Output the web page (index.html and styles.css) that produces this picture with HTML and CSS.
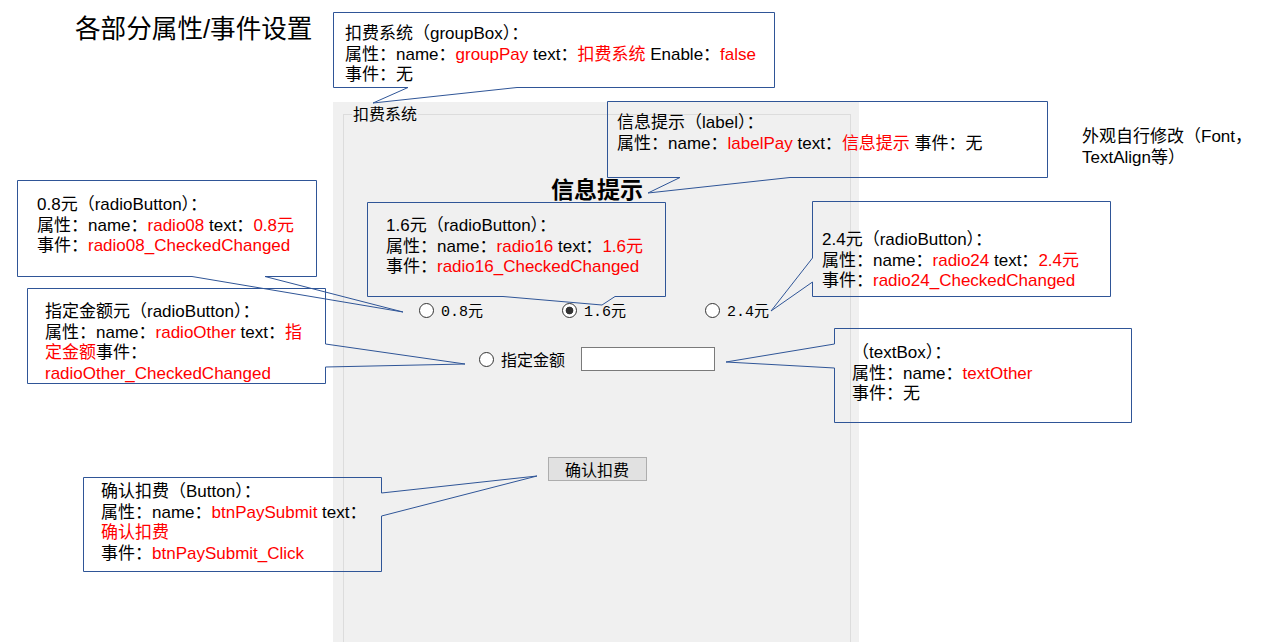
FILE: index.html
```html
<!DOCTYPE html>
<html>
<head>
<meta charset="utf-8">
<title>各部分属性/事件设置</title>
<link rel="stylesheet" href="styles.css">
</head>
<body>
<div class="slide">
<h1 class="title">各部分属性/事件设置</h1>

<!-- the form being described -->
<div class="form">
<div class="group">
<span class="group-title">扣费系统</span>
<div class="info">信息提示</div>
<div class="radio-row">
<label class="radio"><span class="dot"></span>0.8元</label>
<label class="radio checked"><span class="dot"></span>1.6元</label>
<label class="radio"><span class="dot"></span>2.4元</label>
</div>
<div class="other-row">
<label class="radio"><span class="dot"></span>指定金额</label>
<div class="textbox"></div>
</div>
<div class="button">确认扣费</div>
</div>
</div>

<!-- callout outlines with their pointers -->
<svg class="outlines" width="1262" height="642" viewBox="0 0 1262 642">
<path d="M333.5 12.5 H774.5 V87.5 H517 L373 103 L408 87.5 H333.5 Z"/>
<path d="M607.5 101.5 H1047.5 V177.5 H790 L648 193 L680 177.5 H607.5 Z"/>
<path d="M17.5 180.5 H316.5 V276.5 H265 L403 312 L192 276.5 H17.5 Z"/>
<path d="M27.5 288.5 H325.5 V344 L465 364 L325.5 367 V383.5 H27.5 Z"/>
<path d="M367.5 202.5 H665.5 V296.5 H615 L602 305 L503 296.5 H367.5 Z"/>
<path d="M812.5 201.5 H1110.5 V296.5 H812.5 V282 L771 311 L812.5 258 Z"/>
<path d="M834.5 328.5 H1131.5 V422.5 H834.5 V368 L726 362 L834.5 344 Z"/>
<path d="M83.5 477.5 H381.5 V493 L537 476 L381.5 516 V571.5 H83.5 Z"/>
</svg>

<div class="callout c-group">扣费系统（groupBox）：<br>属性：name：<span class="v">groupPay</span> text：<span class="v">扣费系统</span> Enable：<span class="v">false</span><br>事件：无</div>
<div class="callout c-label">信息提示（label）：<br>属性：name：<span class="v">labelPay</span> text：<span class="v">信息提示</span> 事件：无</div>
<div class="callout note">外观自行修改（Font，<br>TextAlign等）</div>
<div class="callout c-r08">0.8元（radioButton）：<br>属性：name：<span class="v">radio08</span> text：<span class="v">0.8元</span><br>事件：<span class="v">radio08_CheckedChanged</span></div>
<div class="callout c-other">指定金额元（radioButton）：<br>属性：name：<span class="v">radioOther</span> text：<span class="v">指</span><br><span class="v">定金额</span>事件：<br><span class="v">radioOther_CheckedChanged</span></div>
<div class="callout c-r16">1.6元（radioButton）：<br>属性：name：<span class="v">radio16</span> text：<span class="v">1.6元</span><br>事件：<span class="v">radio16_CheckedChanged</span></div>
<div class="callout c-r24">2.4元（radioButton）：<br>属性：name：<span class="v">radio24</span> text：<span class="v">2.4元</span><br>事件：<span class="v">radio24_CheckedChanged</span></div>
<div class="callout c-text">（textBox）：<br>属性：name：<span class="v">textOther</span><br>事件：无</div>
<div class="callout c-btn">确认扣费（Button）：<br>属性：name：<span class="v">btnPaySubmit</span> text：<br><span class="v">确认扣费</span><br>事件：<span class="v">btnPaySubmit_Click</span></div>
</div>
</body>
</html>
```

FILE: styles.css
```css
body {
margin: 0;
background: #fff;
font-family: "Liberation Sans", "Noto Sans CJK SC", sans-serif;
color: #000;
}

.slide {
position: relative;
width: 1262px;
height: 642px;
overflow: hidden;
}

.title {
position: absolute;
left: 75px;
top: 13px;
margin: 0;
font-size: 25.6px;
font-weight: normal;
line-height: 32px;
}

/* form mock */
.form {
position: absolute;
left: 333px;
top: 102px;
width: 526px;
height: 540px;
overflow: hidden;
background: #f0f0f0;
font-family: "Noto Sans CJK SC", sans-serif;
font-size: 16px;
}

.group {
position: relative;
margin: 12px 8px 0 10px;
height: 560px;
border: 1px solid #dcdcdc;
display: flex;
flex-direction: column;
align-items: center;
}

.group-title {
position: absolute;
left: 8px;
top: -11px;
padding: 0 1px;
background: #f0f0f0;
line-height: 18px;
}

.info {
margin-top: 59px;
font-size: 23px;
font-weight: bold;
line-height: 28px;
}

.radio {
display: flex;
align-items: center;
gap: 7px;
}

.dot {
width: 13px;
height: 13px;
border: 1px solid #333;
border-radius: 50%;
background: #fff;
}

.checked .dot {
background: radial-gradient(circle, #333 0 3.5px, #fff 4.2px);
}

.radio-row {
align-self: stretch;
display: flex;
align-items: center;
height: 20px;
margin-top: 98px;
padding-left: 75px;
font-family: "Liberation Mono", "Noto Sans CJK SC", monospace;
font-size: 15px;
}

.radio-row .radio {
width: 143px;
}

.other-row {
display: flex;
align-items: center;
gap: 16px;
margin-top: 27px;
}

.textbox {
width: 132px;
height: 22px;
border: 1px solid #7a7a7a;
background: #fff;
}

.button {
margin-top: 86px;
width: 97px;
height: 22px;
border: 1px solid #adadad;
background: #e1e1e1;
text-align: center;
line-height: 22px;
}

/* callouts */
.outlines {
position: absolute;
left: 0;
top: 0;
pointer-events: none;
}

.outlines path {
fill: none;
stroke: #2f5597;
stroke-width: 1;
}

.callout {
position: absolute;
font-size: 17px;
line-height: 20.5px;
white-space: nowrap;
}

.v {
color: #f00;
}

.c-group { left: 345px; top: 24px; }
.c-label { left: 617px; top: 113px; }
.note { left: 1082px; top: 127px; }
.c-r08 { left: 37px; top: 195px; }
.c-other { left: 45px; top: 302px; }
.c-r16 { left: 386px; top: 216px; }
.c-r24 { left: 822px; top: 230px; }
.c-text { left: 852px; top: 343px; }
.c-btn { left: 101px; top: 482px; }
```
